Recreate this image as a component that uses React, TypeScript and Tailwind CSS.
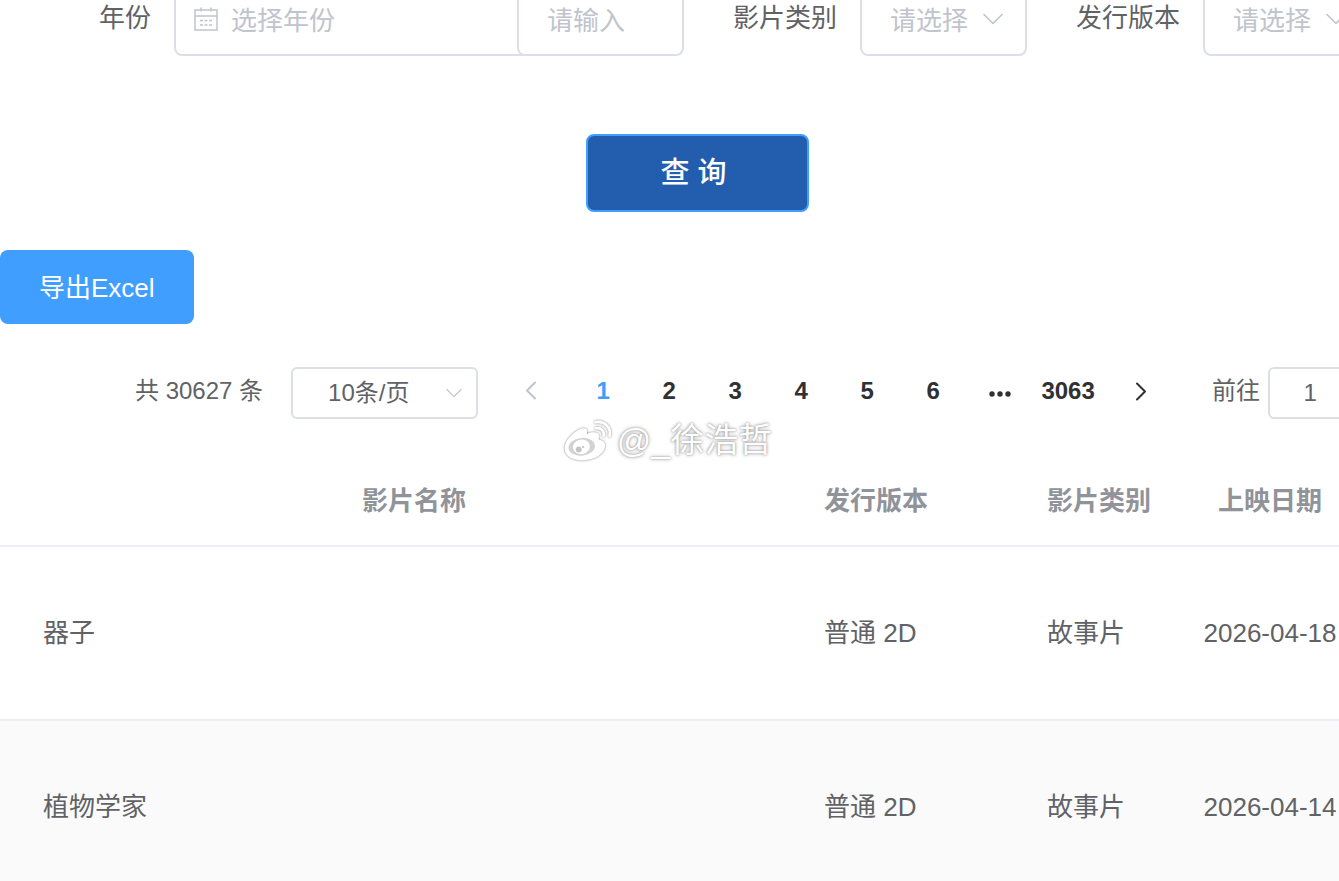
import { useState } from 'react'

interface Film {
  id: number
  name: string
  version: string
  category: string
  releaseDate: string
}

const films: Film[] = [
  { id: 1, name: '器子', version: '普通 2D', category: '故事片', releaseDate: '2026-04-18' },
  { id: 2, name: '植物学家', version: '普通 2D', category: '故事片', releaseDate: '2026-04-14' },
]

const pages = [1, 2, 3, 4, 5, 6]

function ChevronIcon({ className }: { className: string }) {
  return (
    <svg viewBox="0 0 20 12" fill="none" stroke="currentColor" className={className} aria-hidden="true">
      <path d="M1 1.5 10 10.5 19 1.5" strokeWidth="1.6" strokeLinecap="round" strokeLinejoin="round" />
    </svg>
  )
}

function ArrowIcon({ className }: { className: string }) {
  return (
    <svg viewBox="0 0 12 20" fill="none" stroke="currentColor" className={className} aria-hidden="true">
      <path d="M2 2.5 10 10.5 2 18.5" strokeWidth="2" strokeLinecap="round" strokeLinejoin="round" />
    </svg>
  )
}

function CalendarIcon() {
  return (
    <svg viewBox="0 0 24 24" fill="none" stroke="currentColor" className="mb-1 h-6 w-6 shrink-0" aria-hidden="true">
      <rect x="1" y="3" width="22" height="20" strokeWidth="1.5" />
      <path d="M1 9h22M7 .5v4M17 .5v4" strokeWidth="1.5" />
      <path d="M6 13.5h3M10.5 13.5h3M15 13.5h3M6 18h3M10.5 18h3M15 18h3" strokeWidth="1.5" />
    </svg>
  )
}

function WeiboIcon() {
  return (
    <svg
      viewBox="0 0 150 130"
      className="h-[43px] w-[50px] shrink-0 drop-shadow-[0_0_1px_rgba(0,0,0,0.5)]"
      aria-hidden="true"
    >
      <path
        fill="#fff"
        d="M4 90C3 68 27 42 50 31 62 25 74 28 73 37 72 41 71 44 72 45 84 39 108 37 109 51 109 56 106 60 108 62 120 65 128 71 127 82 124 106 96 124 62 125 30 126 6 114 4 90Z"
      />
      <ellipse cx="56" cy="84" rx="40" ry="27" fill="#d2d2d2" transform="rotate(-6 56 84)" />
      <ellipse cx="55" cy="84" rx="26" ry="22" fill="#fff" transform="rotate(-12 55 84)" />
      <circle cx="47" cy="92" r="9" fill="#c4c4c4" />
      <circle cx="60" cy="85" r="3.5" fill="#c4c4c4" />
      <path
        d="M97 10C124 4 146 26 140 51M99 28C114 25 126 37 122 51"
        fill="none"
        stroke="#fff"
        strokeWidth="8"
        strokeLinecap="round"
      />
    </svg>
  )
}

function FilterSelect({ id, label }: { id: string; label: string }) {
  return (
    <div className="flex shrink-0 items-start">
      <label htmlFor={id} className="mr-[23px] leading-9">
        {label}
      </label>
      <div className="grid w-[167px] items-start">
        <select
          id={id}
          className="col-start-1 row-start-1 h-14 w-full appearance-none rounded-b-lg border-2 border-t-0 border-[#dcdfe6] bg-white pb-3 pl-7 text-[#c0c4cc] outline-none"
        >
          <option>请选择</option>
        </select>
        <ChevronIcon className="pointer-events-none col-start-1 row-start-1 mt-[13px] mr-6 h-3 w-5 justify-self-end text-[#c0c4cc]" />
      </div>
    </div>
  )
}

function FilterBar() {
  return (
    <form className="flex items-start gap-[49px] pl-[99px] text-[26px] text-[#606266]">
      <div className="flex shrink-0 items-start">
        <label htmlFor="year" className="mr-[23px] leading-9">
          年份
        </label>
        <div className="flex h-14 w-[360px] items-center gap-[13px] rounded-b-lg border-2 border-t-0 border-[#dcdfe6] pb-3 pl-[18px] text-[#c0c4cc]">
          <CalendarIcon />
          <input
            id="year"
            placeholder="选择年份"
            className="w-full min-w-0 bg-transparent outline-none placeholder:text-[#c0c4cc]"
          />
        </div>
        <input
          aria-label="影片名称"
          placeholder="请输入"
          className="-ml-[17px] h-14 w-[167px] rounded-b-lg border-2 border-t-0 border-[#dcdfe6] bg-white pb-3 pl-7 outline-none placeholder:text-[#c0c4cc]"
        />
      </div>
      <FilterSelect id="category" label="影片类别" />
      <FilterSelect id="version" label="发行版本" />
    </form>
  )
}

function Pagination() {
  const [current, setCurrent] = useState(1)

  return (
    <nav aria-label="分页" className="mt-[43px] flex items-center pl-[135px] text-2xl text-[#606266]">
      <span className="mr-7 shrink-0 pb-1">共 30627 条</span>
      <div className="grid w-[187px] shrink-0 items-center">
        <select
          aria-label="每页条数"
          className="col-start-1 row-start-1 h-[52px] w-full appearance-none rounded-md border-2 border-[#dcdfe6] bg-white pl-[35px] outline-none"
        >
          <option>10条/页</option>
        </select>
        <ChevronIcon className="pointer-events-none col-start-1 row-start-1 mr-4 h-2.5 w-4 justify-self-end text-[#c0c4cc]" />
      </div>
      <div className="flex shrink-0 items-center pb-1 pl-5 font-bold text-[#303133]">
        <button
          type="button"
          disabled
          aria-label="上一页"
          className="mr-1.5 flex w-[66px] items-center justify-center text-[#c0c4cc]"
        >
          <ArrowIcon className="h-5 w-3 rotate-180" />
        </button>
        {pages.map((page) => (
          <button
            key={page}
            type="button"
            onClick={() => setCurrent(page)}
            className={page === current ? 'w-[66px] text-[#409eff]' : 'w-[66px]'}
          >
            {page}
          </button>
        ))}
        <button type="button" aria-label="向后 5 页" className="flex w-[67px] justify-center">
          <svg viewBox="0 0 24 6" fill="currentColor" className="mt-1.5 h-1.5 w-6" aria-hidden="true">
            <circle cx="4" cy="3" r="2.7" />
            <circle cx="12" cy="3" r="2.7" />
            <circle cx="20" cy="3" r="2.7" />
          </svg>
        </button>
        <button type="button" className="w-[70px]">
          3063
        </button>
        <button type="button" aria-label="下一页" className="flex w-[76px] items-center justify-center">
          <ArrowIcon className="h-5 w-3" />
        </button>
      </div>
      <label htmlFor="jump" className="ml-[33px] shrink-0 pb-1">
        前往
      </label>
      <input
        id="jump"
        defaultValue="1"
        className="ml-2 h-[52px] w-[84px] shrink-0 rounded-md border-2 border-[#dcdfe6] bg-white text-center outline-none"
      />
    </nav>
  )
}

function FilmTable() {
  return (
    <table className="mt-9 w-full min-w-[1356px] table-fixed border-separate border-spacing-0 text-left text-[26px] text-[#606266]">
      <thead>
        <tr className="h-[92px] text-[#909399]">
          <th className="border-b-2 border-[#ebeef5] pt-0.5 pl-6 text-center">影片名称</th>
          <th className="w-[223px] border-b-2 border-[#ebeef5] pt-0.5 pl-5">发行版本</th>
          <th className="w-[157px] border-b-2 border-[#ebeef5] pt-0.5 pl-5">影片类别</th>
          <th className="w-[172px] border-b-2 border-[#ebeef5] pt-0.5 text-center">上映日期</th>
        </tr>
      </thead>
      <tbody>
        {films.map((film) => (
          <tr key={film.id} className="h-[174px] even:bg-[#fafafa]">
            <td className="border-b-2 border-[#ebeef5] pl-[43px]">{film.name}</td>
            <td className="border-b-2 border-[#ebeef5] pl-5">{film.version}</td>
            <td className="border-b-2 border-[#ebeef5] pl-5">{film.category}</td>
            <td className="border-b-2 border-[#ebeef5] text-center">{film.releaseDate}</td>
          </tr>
        ))}
      </tbody>
    </table>
  )
}

export default function App() {
  return (
    <main className="relative h-screen overflow-hidden bg-white font-['Liberation_Sans','Noto_Sans_CJK_SC',sans-serif] antialiased">
      <FilterBar />

      {/* Actions */}
      <div className="mt-[78px] flex justify-center pl-14">
        <button
          type="button"
          className="h-[78px] w-[223px] rounded-lg border-2 border-[#409eff] bg-[#225dae] pt-0.5 pr-2 text-[29px] font-medium text-white"
        >
          查 询
        </button>
      </div>
      <button
        type="button"
        className="mt-[38px] block h-[74px] rounded-lg bg-[#409eff] px-[39px] pt-0.5 text-[26px] text-white"
      >
        导出Excel
      </button>

      <Pagination />
      <FilmTable />

      {/* Watermark */}
      <div className="pointer-events-none absolute inset-0 flex items-center justify-center gap-1 pr-1 text-[34px] text-white">
        <WeiboIcon />
        <span className="[text-shadow:0_0_2px_rgba(0,0,0,0.4),0_0_4px_rgba(0,0,0,0.3)]">@_徐浩哲</span>
      </div>
    </main>
  )
}
